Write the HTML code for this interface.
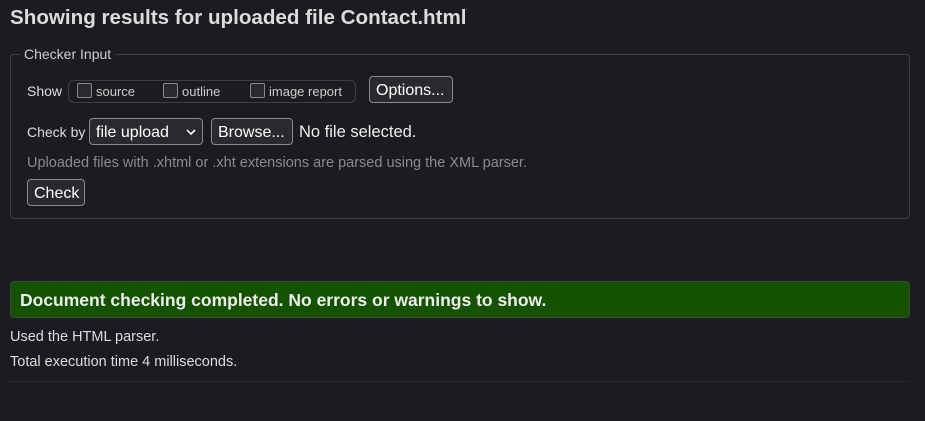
<!DOCTYPE html>
<html><head><style>
body{margin:0;background:#1b1c1f;color:#e6e6e6;font-family:"Liberation Sans",sans-serif;width:925px;height:421px;overflow:hidden;position:relative}
.a{position:absolute;white-space:nowrap}
h1{position:absolute;left:10px;top:6px;margin:0;font-size:20.6px;font-weight:bold;color:#dcdcdc;white-space:nowrap}
.fs{position:absolute;left:10px;top:54px;width:898px;height:163px;border:1px solid #3d3e42;border-radius:4px}
.btn{position:absolute;border:1px solid #8a8a8e;border-radius:4px;background:#2a2a2e;color:#fff;font-size:16px;box-sizing:border-box;padding:0 6px;line-height:28px}
.cb{display:inline-block;width:13px;height:13px;border:1.5px solid #8a8a8e;border-radius:2px;vertical-align:-2px;margin-right:4px;background:#2a2a2e}
</style></head><body>
<h1>Showing results for uploaded file Contact.html</h1>
<div class="fs"></div>
<div class="a" style="left:20px;top:46px;background:#1b1c1f;padding:0 4px;font-size:14px;color:#ccc">Checker Input</div>
<div class="a" style="left:27px;top:83px;font-size:14px;color:#ddd">Show</div>
<div class="a" style="left:68px;top:80px;width:286px;height:21px;border:1px solid #3d3e42;border-radius:6px;font-size:13px;color:#ccc;line-height:21px">
<span style="position:absolute;left:8px"><span class="cb"></span>source</span>
<span style="position:absolute;left:94px"><span class="cb"></span>outline</span>
<span style="position:absolute;left:181px"><span class="cb"></span>image report</span></div>
<div class="btn" style="left:369px;top:76px;height:27px;width:84px">Options...</div>
<div class="a" style="left:27px;top:124px;font-size:14px;color:#ddd">Check by</div>
<div class="btn" style="left:89px;top:118px;height:27px;width:114px">file upload <svg width="10" height="7" style="position:absolute;left:96px;top:10px"><path d="M1 1L5 5L9 1" stroke="#fff" stroke-width="1.6" fill="none"/></svg></div>
<div class="btn" style="left:211px;top:118px;height:27px;width:82px">Browse...</div>
<div class="a" style="left:299px;top:123px;font-size:16.5px;color:#eee">No file selected.</div>
<div class="a" style="left:27px;top:155px;font-size:14.5px;color:#8a8a8e">Uploaded files with .xhtml or .xht extensions are parsed using the XML parser.</div>
<div class="btn" style="left:27px;top:179px;height:27px;width:58px;padding:0 6px">Check</div>
<div class="a" style="left:10px;top:281px;width:898px;height:35px;background:#145200;border:1px solid #3a4a36;border-radius:4px"></div>
<div class="a" style="left:20px;top:290px;font-size:17.5px;font-weight:bold;color:#eee">Document checking completed. No errors or warnings to show.</div>
<div class="a" style="left:10px;top:329px;font-size:14.5px;color:#ddd">Used the HTML parser.</div>
<div class="a" style="left:10px;top:354px;font-size:14.5px;color:#ddd">Total execution time 4 milliseconds.</div>
<div class="a" style="left:10px;top:381px;width:898px;border-top:1px dotted #3d3e42"></div>
</body></html>
